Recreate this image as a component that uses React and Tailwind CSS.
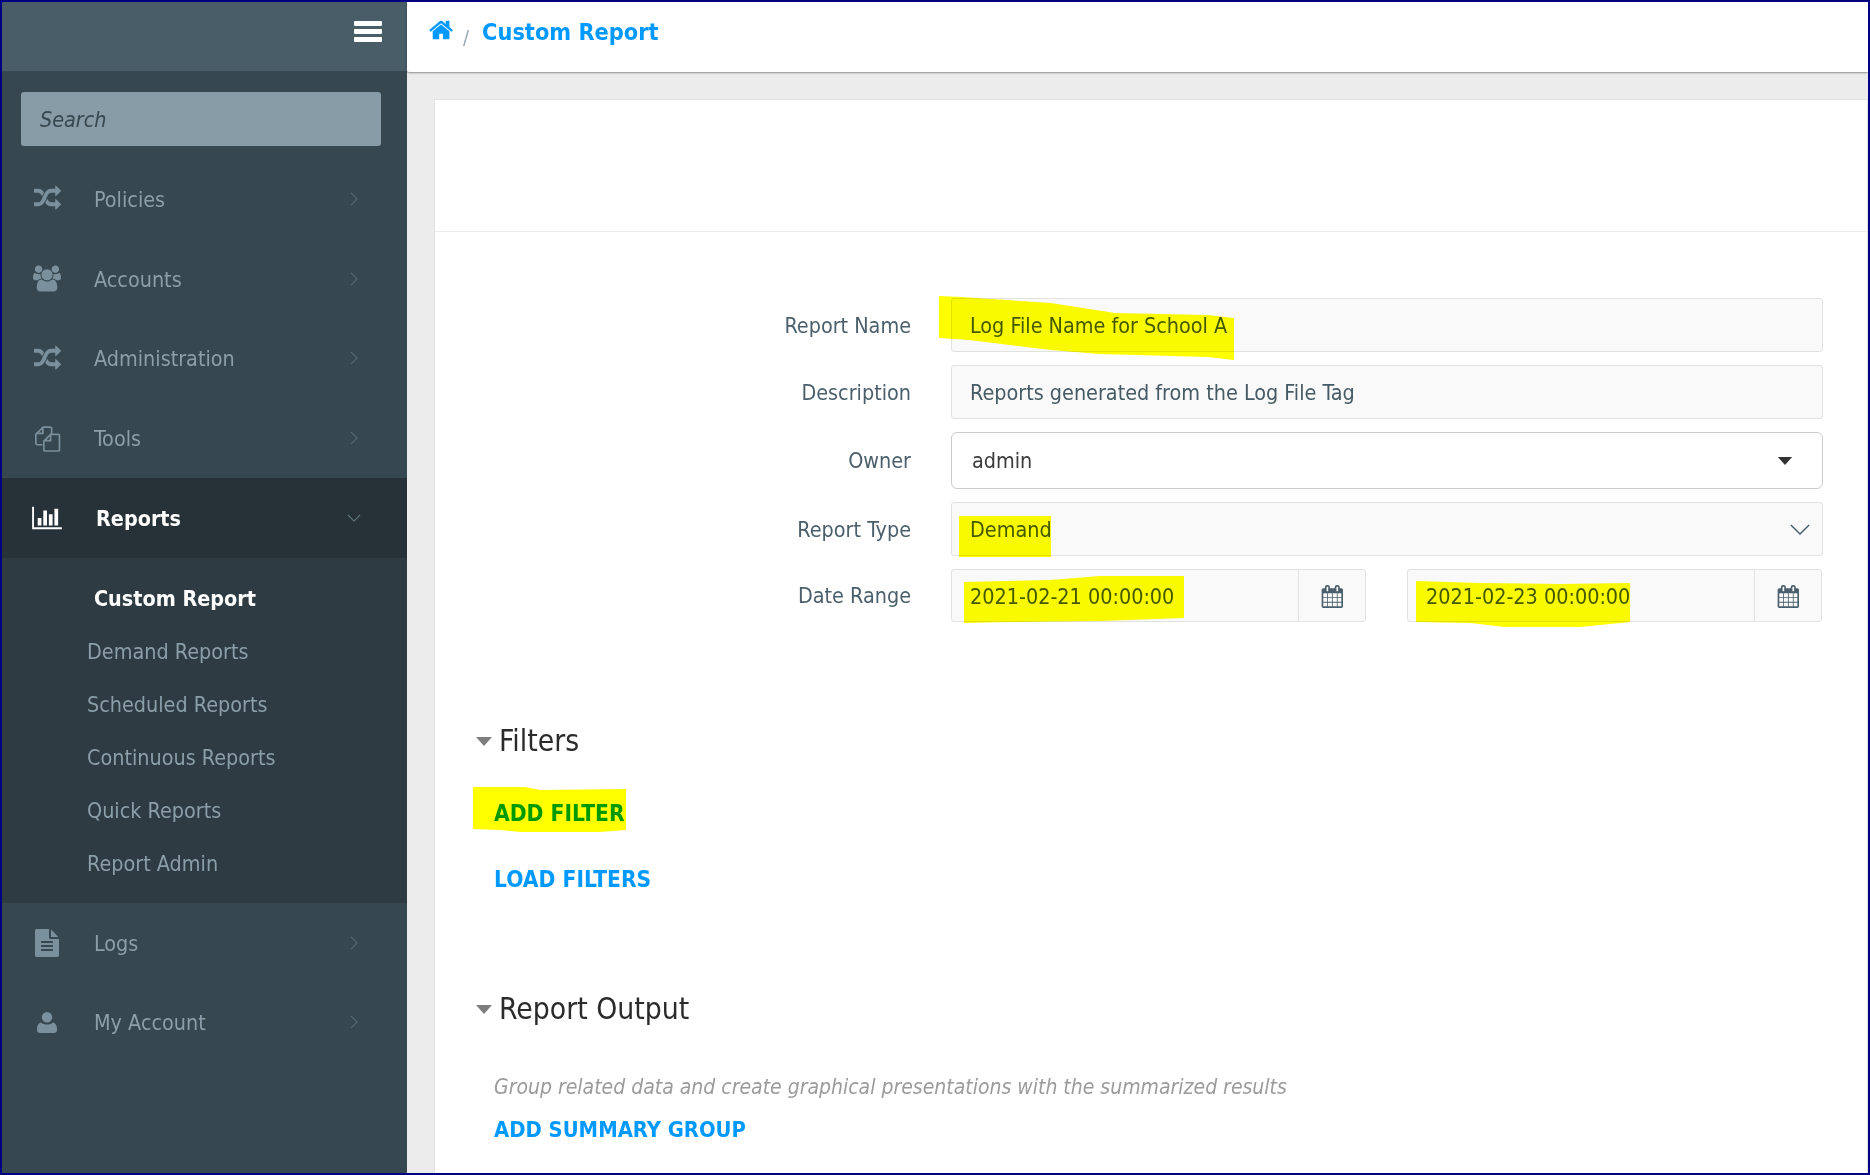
import React from "react";

const P = {
  random: "M666 481q-60 92-137 273-22-45-37-72.5t-40.5-63.5-51-56.5-63-35-81.5-14.5h-224q-14 0-23-9t-9-23v-192q0-14 9-23t23-9h224q250 0 410 225zm1126 799q0 14-9 23l-320 320q-9 9-23 9-13 0-22.5-9.5t-9.5-22.5v-192q-32 0-85 .5t-81 1-73-1-71-5-64-10.5-63-18.5-58-28.5-59-40-55-53.5-56-69.5q59-93 136-273 22 45 37 72.5t40.5 63.5 51 56.5 63 35 81.5 14.5h256v-192q0-14 9-23t23-9q12 0 24 10l319 319q9 9 9 23zm0-896q0 14-9 23l-320 320q-9 9-23 9-13 0-22.5-9.5t-9.5-22.5v-192h-256q-48 0-87 15t-69 45-51 61.5-45 77.5q-32 62-78 171-29 66-49.5 111t-54 105-64 100-74 83-90 68.5-106.5 42-128 16.5h-224q-14 0-23-9t-9-23v-192q0-14 9-23t23-9h224q48 0 87-15t69-45 51-61.5 45-77.5q32-62 78-171 29-66 49.5-111t54-105 64-100 74-83 90-68.5 106.5-42 128-16.5h256v-192q0-14 9-23t23-9q12 0 24 10l319 319q9 9 9 23z",
  users: "M593 896q-162 5-265 128h-134q-82 0-138-40.5t-56-118.5q0-353 124-353 6 0 43.5 21t97.5 42.5 119 21.5q67 0 133-23-5 37-5 66 0 139 81 256zm1071 637q0 120-73 189.5t-194 69.5h-874q-121 0-194-69.5t-73-189.5q0-53 3.5-103.5t14-109 26.5-108.5 43-97.5 62-81 85.5-53.5 111.5-20q10 0 43 21.5t73 48 107 48 135 21.5 135-21.5 107-48 73-48 43-21.5q61 0 111.5 20t85.5 53.5 62 81 43 97.5 26.5 108.5 14 109 3.5 103.5zm-1024-1277q0 106-75 181t-181 75-181-75-75-181 75-181 181-75 181 75 75 181zm704 384q0 159-112.5 271.5t-271.5 112.5-271.5-112.5-112.5-271.5 112.5-271.5 271.5-112.5 271.5 112.5 112.5 271.5zm576 225q0 78-56 118.5t-138 40.5h-134q-103-123-265-128 81-117 81-256 0-29-5-66 66 23 133 23 59 0 119-21.5t97.5-42.5 43.5-21q124 0 124 353zm-128-609q0 106-75 181t-181 75-181-75-75-181 75-181 181-75 181 75 75 181z",
  chart: "M640 896v512h-256v-512h256zm384-512v1024h-256v-1024h256zm1024 1152v128h-2048v-1536h128v1408h1920zm-640-896v768h-256v-768h256zm384-384v1152h-256v-1152h256z",
  file: "M1596 476q14 14 28 36h-472v-472q22 14 36 28zm-476 164h544v1056q0 40-28 68t-68 28h-1344q-40 0-68-28t-28-68v-1600q0-40 28-68t68-28h800v544q0 40 28 68t68 28zm160 736v-64q0-14-9-23t-23-9h-704q-14 0-23 9t-9 23v64q0 14 9 23t23 9h704q14 0 23-9t9-23zm0-256v-64q0-14-9-23t-23-9h-704q-14 0-23 9t-9 23v64q0 14 9 23t23 9h704q14 0 23-9t9-23zm0-256v-64q0-14-9-23t-23-9h-704q-14 0-23 9t-9 23v64q0 14 9 23t23 9h704q14 0 23-9t9-23z",
  home: "M1408 992v480q0 26-19 45t-45 19h-384v-384h-256v384h-384q-26 0-45-19t-19-45v-480q0-1 .5-3t.5-3l575-474 575 474q1 2 1 6zm223-69l-62 74q-8 9-21 11h-3q-13 0-21-7l-692-577-692 577q-12 8-24 7-13-2-21-11l-62-74q-8-10-7-23.5t11-21.5l719-599q32-26 76-26t76 26l244 204v-195q0-14 9-23t23-9h192q14 0 23 9t9 23v408l219 182q10 8 11 21.5t-7 23.5z",
  cal: "M192 1664h288v-288h-288v288zm352 0h320v-288h-320v288zm-352-352h288v-320h-288v320zm352 0h320v-320h-320v320zm-352-384h288v-288h-288v288zm736 736h320v-288h-320v288zm-384-736h320v-288h-320v288zm768 736h288v-288h-288v288zm-384-352h320v-320h-320v320zm-352-864v-288q0-13-9.5-22.5t-22.5-9.5h-64q-13 0-22.5 9.5t-9.5 22.5v288q0 13 9.5 22.5t22.5 9.5h64q13 0 22.5-9.5t9.5-22.5zm736 864h288v-320h-288v320zm-384-384h320v-288h-320v288zm384 0h288v-288h-288v288zm32-480v-288q0-13-9.5-22.5t-22.5-9.5h-64q-13 0-22.5 9.5t-9.5 22.5v288q0 13 9.5 22.5t22.5 9.5h64q13 0 22.5-9.5t9.5-22.5zm384-64v1280q0 52-38 90t-90 38h-1408q-52 0-90-38t-38-90v-1280q0-52 38-90t90-38h128v-96q0-66 47-113t113-47h64q66 0 113 47t47 113v96h384v-96q0-66 47-113t113-47h64q66 0 113 47t47 113v96h128q52 0 90 38t38 90z",
};

const Icon = ({ d, vb = "0 0 1792 1792", className }) => (
  <svg viewBox={vb} className={className} fill="currentColor" aria-hidden="true">
    <path d={d} />
  </svg>
);

const ToolsIcon = ({ className }) => (
  <svg viewBox="0 0 26 26" className={className} fill="none" stroke="currentColor" strokeWidth="1.600" aria-hidden="true">
    <path d="M8 19H3a1.500 1.500 0 0 1-1.200-1.500V9l7-7h6.500A1.500 1.500 0 0 1 17 3.500V9" />
    <path d="M8.500 2v6H2" />
    <path d="M16 9h7.500a1 1 0 0 1 1 1v14a1 1 0 0 1-1 1H10.500a1 1 0 0 1-1-1V15.500z" />
    <path d="M16 9.500V15H10" />
  </svg>
);

const UserIcon = ({ className }) => (
  <svg viewBox="0 0 20 21" className={className} fill="currentColor" aria-hidden="true">
    <circle cx="10" cy="5.300" r="5.200" />
    <path d="M4 10.500c1.500 1.400 3.600 2.100 6 2.100s4.500-.7 6-2.100c2.500.5 4 3 4 6.500v1c0 1.700-1.300 3-3 3H3c-1.700 0-3-1.300-3-3v-1c0-3.500 1.500-6 4-6.500z" />
  </svg>
);

const ChevRight = () => (
  <svg viewBox="0 0 9 16" className="w-[8px] h-[14px] text-[#546a76]" fill="none" stroke="currentColor" strokeWidth="1.300">
    <path d="M1 1l7 7-7 7" />
  </svg>
);

const NavRow = ({ icon, label, active }) => (
  <div className={`flex items-center h-[79.75px] ${active ? "bg-[#273238] text-white font-bold" : "text-[#8c9fa9]"}`}>
    <div className={`w-[92px] flex justify-center shrink-0 pr-[2px] ${active ? "text-white" : "text-[#7a909c]"}`}>{icon}</div>
    <span className={`text-[21.4px] flex-1 pt-[2px] ${active ? "ml-[2px]" : ""}`}>{label}</span>
    <div className={active ? "w-[60px] flex" : "w-[57px] flex"}>
      {active ? (
        <svg viewBox="0 0 16 9" className="w-[14px] h-[8px] text-[#667a84]" fill="none" stroke="currentColor" strokeWidth="1.300">
          <path d="M1 1l7 7 7-7" />
        </svg>
      ) : (
        <ChevRight />
      )}
    </div>
  </div>
);

const Row = ({ label, children }) => (
  <div className="flex items-center">
    <label className="w-[476px] pt-[2px] text-right text-[21.4px] text-[#4a5f6b] shrink-0">{label}</label>
    <div className="ml-[40px] w-[872px]">{children}</div>
  </div>
);

const Field = ({ children, right }) => (
  <div className="h-[54px] flex items-center justify-between bg-[#f9f9f9] border border-[#e2e2e2] rounded-[3px] pl-[18px] pr-[12px] text-[21.4px] text-[#455a64]">
    <span className="pt-[2px]">{children}</span>
    {right}
  </div>
);

const DateField = ({ value }) => (
  <div className="h-[53px] w-[415px] flex bg-[#f9f9f9] border border-[#e2e2e2] rounded-[3px] text-[21.4px] text-[#455a64]">
    <span className="flex-1 flex items-center pl-[18px] pt-[3px]">{value}</span>
    <div className="w-[67px] border-l border-[#e2e2e2] flex items-center justify-center pr-[2px] pt-[1px]">
      <Icon d={P.cal} className="w-[23px] h-[23px] text-[#4a5f6b]" vb="0 0 1664 1792" />
    </div>
  </div>
);

const Arrow = () => (
  <svg viewBox="0 0 16 9" className="w-[16px] h-[9px] text-[#7d7d7d]" fill="currentColor">
    <path d="M0 0h16L8 9z" />
  </svg>
);

const Heading = ({ className, children }) => (
  <div className={`flex items-center ml-[41px] h-[40px] gap-[7px] ${className}`}>
    <Arrow />
    <span className="text-[29.8px] text-[#2b2b2b]">{children}</span>
  </div>
);

export default function App() {
  return (
    <div className="relative box-border w-[1870px] h-[1175px] border-2 border-[#000080] flex overflow-hidden font-['DejaVu_Sans',sans-serif] [font-stretch:condensed]">
      <aside className="w-[405px] shrink-0 bg-[#37474f] flex flex-col">
        <div className="h-[69px] bg-[#495d69] flex items-start justify-end pr-[25px] pt-[19px]">
          <div className="w-[28px] flex flex-col gap-[3px]">
            <div className="h-[5px] bg-white rounded-[1px]" />
            <div className="h-[5px] bg-white rounded-[1px]" />
            <div className="h-[5px] bg-white rounded-[1px]" />
          </div>
        </div>
        <div className="mt-[21px] ml-[19px] mr-[26px] h-[54px] bg-[#879ca6] rounded-[3px] flex items-center px-[19px] pt-[2px] italic text-[21.4px] text-[#37474f]">
          Search
        </div>
        <div className="mt-[13px]">
          <NavRow icon={<Icon d={P.random} className="w-[27px] h-[27px]" />} label="Policies" />
          <NavRow icon={<Icon d={P.users} vb="0 0 1920 1792" className="w-[28px] h-[27px]" />} label="Accounts" />
          <NavRow icon={<Icon d={P.random} className="w-[27px] h-[27px]" />} label="Administration" />
          <NavRow icon={<ToolsIcon className="w-[27px] h-[27px]" />} label="Tools" />
          <NavRow active icon={<Icon d={P.chart} vb="0 0 2048 1792" className="w-[30px] h-[26px]" />} label="Reports" />
          <div className="bg-[#2e3b43] pt-[14px] pb-[13px] text-[21.4px] text-[#8c9fa9]">
            <div className="h-[53px] flex items-center pl-[92px] pt-[2px] text-white font-bold">Custom Report</div>
            {["Demand Reports", "Scheduled Reports", "Continuous Reports", "Quick Reports", "Report Admin"].map((t) => (
              <div key={t} className="h-[53px] flex items-center pl-[85px] pt-[2px]">{t}</div>
            ))}
          </div>
          <NavRow icon={<Icon d={P.file} className="w-[28px] h-[28px]" />} label="Logs" />
          <NavRow icon={<UserIcon className="w-[20px] h-[21px]" />} label="My Account" />
        </div>
      </aside>

      <main className="flex-1 bg-[#ececec] min-w-0">
        <div className="h-[70px] bg-white shadow-[0_1px_2px_rgba(0,0,0,0.4)] flex items-start pl-[22px] pt-[15px] rounded-bl-[2px]">
          <Icon d={P.home} className="w-[26px] h-[26px] text-[#0099ff]" />
          <span className="ml-[8px] mt-[5px] text-[20px] text-[#9aa8b0]">/</span>
          <span className="ml-[13px] text-[23.3px] leading-[30px] font-bold text-[#0099ff]">Custom Report</span>
        </div>
        <div className="ml-[27px] mt-[27px] h-[1100px] bg-white border border-[#e2e2e2]">
          <div className="h-[132px] border-b border-[#ececec]" />
          <div className="pt-[66px] flex flex-col gap-[13px]">
            <Row label="Report Name"><Field>Log File Name for School A</Field></Row>
            <Row label="Description"><Field>Reports generated from the Log File Tag</Field></Row>
            <Row label="Owner">
              <div className="h-[57px] flex items-center justify-between bg-white border border-[#cccccc] rounded-[6px] pl-[20px] pr-[29px] text-[21.4px] text-[#3a3a3a]">
                <span className="pt-[2px]">admin</span>
                <svg viewBox="0 0 16 9" className="w-[16px] h-[8px] text-[#333333]" fill="currentColor"><path d="M0 0h16L8 9z" /></svg>
              </div>
            </Row>
            <Row label="Report Type">
              <Field right={
                <svg viewBox="0 0 22 12" className="w-[20px] h-[11px] text-[#4a5f6b]" fill="none" stroke="currentColor" strokeWidth="1.600"><path d="M1 1l10 10L21 1" /></svg>
              }>Demand</Field>
            </Row>
            <Row label="Date Range">
              <div className="flex gap-[41px]">
                <DateField value="2021-02-21 00:00:00" />
                <DateField value="2021-02-23 00:00:00" />
              </div>
            </Row>
          </div>
          <Heading className="mt-[99px]">Filters</Heading>
          <div className="ml-[59px] mt-[38px] h-[28px] leading-[28px] text-[22.6px] font-bold text-[#0099ff]">ADD FILTER</div>
          <div className="ml-[59px] mt-[38px] h-[28px] leading-[28px] text-[22.6px] font-bold text-[#0099ff]">LOAD FILTERS</div>
          <Heading className="mt-[96px]">Report Output</Heading>
          <div className="ml-[59px] mt-[44px] h-[28px] leading-[28px] text-[21px] italic text-[#9b9b9b]">Group related data and create graphical presentations with the summarized results</div>
          <div className="ml-[59px] mt-[15px] h-[28px] leading-[28px] text-[21.8px] font-bold text-[#0099ff]">ADD SUMMARY GROUP</div>
        </div>
      </main>

      <svg className="absolute left-[-2px] top-[-2px] w-[1870px] h-[1175px] pointer-events-none mix-blend-multiply" viewBox="0 0 1870 1175" fill="#ffff00">
        <polygon points="939,296 961,297 1051,303 1115,313 1208,315 1234,318 1234,360 1208,357 1099,354 1051,350 969,340 939,338" />
        <polygon points="959,516 1051,516 1051,557 959,557" />
        <polygon points="964,582 1050,580 1100,576 1184,576 1184,618 1100,621 1010,622 964,623" />
        <polygon points="1416,581 1480,583 1560,584 1630,583 1630,622 1580,627 1505,627 1470,623 1416,622" />
        <polygon points="473,787 525,787 540,790 626,789 626,830 600,832 520,832 500,830 473,829" />
      </svg>
    </div>
  );
}
